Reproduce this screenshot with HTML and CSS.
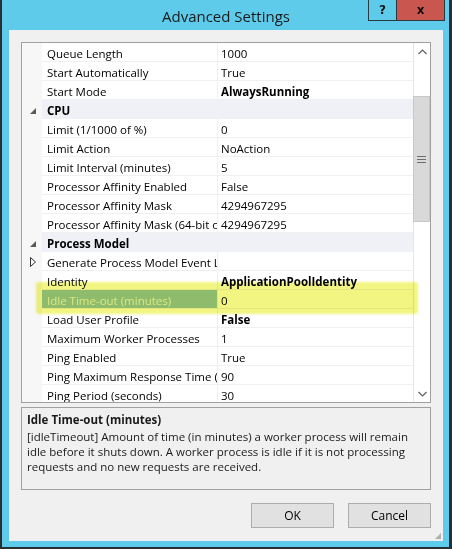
FILE: index.html
```html
<!DOCTYPE html>
<html>
<head>
<meta charset="utf-8">
<link rel="stylesheet" href="styles.css">
</head>
<body>
<div class="window">
  <div class="titlebar">
    <div class="title">Advanced Settings</div>
    <div class="caption-btns">
      <div class="cbtn help">?</div>
      <div class="cbtn close">x</div>
    </div>
  </div>
  <div class="client">
    <div class="pg">
      <div class="rows">
        <div class="row"><div class="gut"></div><div class="name">Queue Length</div><div class="val">1000</div></div>
        <div class="row"><div class="gut"></div><div class="name">Start Automatically</div><div class="val">True</div></div>
        <div class="row"><div class="gut"></div><div class="name">Start Mode</div><div class="val bold">AlwaysRunning</div></div>
        <div class="row cat"><div class="gut"><svg class="tri" width="6" height="6" viewBox="0 0 6 6"><polygon points="0,6 6,6 6,0" fill="#5a5a5a"/></svg></div><div class="catname">CPU</div></div>
        <div class="row"><div class="gut"></div><div class="name">Limit (1/1000 of %)</div><div class="val">0</div></div>
        <div class="row"><div class="gut"></div><div class="name">Limit Action</div><div class="val">NoAction</div></div>
        <div class="row"><div class="gut"></div><div class="name">Limit Interval (minutes)</div><div class="val">5</div></div>
        <div class="row"><div class="gut"></div><div class="name">Processor Affinity Enabled</div><div class="val">False</div></div>
        <div class="row"><div class="gut"></div><div class="name">Processor Affinity Mask</div><div class="val">4294967295</div></div>
        <div class="row"><div class="gut"></div><div class="name">Processor Affinity Mask (64-bit option)</div><div class="val">4294967295</div></div>
        <div class="row cat"><div class="gut"><svg class="tri" width="6" height="6" viewBox="0 0 6 6"><polygon points="0,6 6,6 6,0" fill="#5a5a5a"/></svg></div><div class="catname">Process Model</div></div>
        <div class="row"><div class="gut"><svg class="exp" width="6" height="10" viewBox="0 0 6 10"><polygon points="0.5,0.5 5.5,5 0.5,9.5" fill="none" stroke="#333" stroke-width="1"/></svg></div><div class="name">Generate Process Model Event Log Entry</div><div class="val"></div></div>
        <div class="row"><div class="gut"></div><div class="name">Identity</div><div class="val bold">ApplicationPoolIdentity</div></div>
        <div class="row"><div class="gut"></div><div class="name sel">Idle Time-out (minutes)</div><div class="val">0</div></div>
        <div class="row"><div class="gut"></div><div class="name">Load User Profile</div><div class="val bold">False</div></div>
        <div class="row"><div class="gut"></div><div class="name">Maximum Worker Processes</div><div class="val">1</div></div>
        <div class="row"><div class="gut"></div><div class="name">Ping Enabled</div><div class="val">True</div></div>
        <div class="row"><div class="gut"></div><div class="name">Ping Maximum Response Time (seconds)</div><div class="val">90</div></div>
        <div class="row"><div class="gut"></div><div class="name">Ping Period (seconds)</div><div class="val">30</div></div>
      </div>
      <div class="scrollbar">
        <div class="arrow"><svg width="9" height="6" viewBox="0 0 9 6"><polyline points="0.5,5 4.5,1 8.5,5" fill="none" stroke="#606060" stroke-width="1.2"/></svg></div>
        <div class="track top"></div>
        <div class="thumb"><svg width="9" height="7" viewBox="0 0 9 7"><rect x="0" y="0" width="9" height="1" fill="#6d6d6d"/><rect x="0" y="3" width="9" height="1" fill="#6d6d6d"/><rect x="0" y="6" width="9" height="1" fill="#6d6d6d"/></svg></div>
        <div class="track bottom"></div>
        <div class="arrow"><svg width="9" height="6" viewBox="0 0 9 6"><polyline points="0.5,1 4.5,5 8.5,1" fill="none" stroke="#606060" stroke-width="1.2"/></svg></div>
      </div>
      <div class="highlight"></div>
    </div>
    <div class="desc">
      <div class="desc-title">Idle Time-out (minutes)</div>
      <div class="desc-text">[idleTimeout] Amount of time (in minutes) a worker process will remain idle before it shuts down. A worker process is idle if it is not processing requests and no new requests are received.</div>
    </div>
    <div class="buttons">
      <div class="btn">OK</div>
      <div class="btn">Cancel</div>
    </div>
    <div class="grip"></div>
  </div>
</div>
</body>
</html>
```

FILE: styles.css
```css
html, body {
  margin: 0;
  padding: 0;
  background: #2a2f33;
}
body {
  width: 452px;
  height: 549px;
  overflow: hidden;
  font-family: "Open Sans", "Noto Sans", sans-serif;
  font-size: 11.5px;
  color: #000;
}
.window {
  box-sizing: border-box;
  width: 452px;
  height: 549px;
  border-left: 2px solid #2a2f33;
  border-right: 3px solid #2a2f33;
  border-bottom: 2px solid #2a2f33;
  background: #5dcbe9;
  padding: 0 6px 6px 7px;
  display: flex;
  flex-direction: column;
}
.titlebar {
  height: 30px;
  position: relative;
  display: flex;
  justify-content: center;
  align-items: center;
}
.title {
  font-size: 15px;
  color: #1a1a1a;
  margin-top: 1px;
  margin-left: 0;
}
.caption-btns {
  position: absolute;
  top: 0;
  right: -2px;
  display: flex;
}
.cbtn {
  height: 20px;
  display: flex;
  align-items: center;
  justify-content: center;
  font-weight: bold;
  font-family: "DejaVu Sans", sans-serif;
  color: #111;
  border-bottom: 1px solid #2a3a40;
}
.help {
  width: 27px;
  border-left: 1px solid #2a3a40;
  font-size: 12px;
}
.close {
  width: 47px;
  background: #c9574f;
  font-size: 12px;
  border-left: 1px solid #2a3a40;
  border-right: 1px solid #2a3a40;
}
.client {
  flex: 1;
  background: #f0f0f0;
  padding: 12px 12px 0 12px;
  display: flex;
  flex-direction: column;
  position: relative;
}
.pg {
  position: relative;
  height: 361px;
  box-sizing: border-box;
  border: 1px solid #a0a0a0;
  background: #fff;
  display: flex;
}
.rows {
  flex: 1;
  overflow: hidden;
}
.row {
  display: flex;
  height: 19px;
  white-space: nowrap;
}
.gut {
  width: 20px;
  flex: none;
  background: #f7f7f7;
  display: flex;
  align-items: center;
  justify-content: center;
}
.tri {
  margin-left: 2px;
  margin-top: 3px;
}
.exp {
  margin-left: 2px;
  margin-top: 1px;
}
.name, .val, .catname {
  box-sizing: border-box;
  padding-top: 2px;
  line-height: 17px;
  overflow: hidden;
}
.name {
  width: 176px;
  flex: none;
  padding-left: 5px;
  border-right: 1px solid #f0f0f0;
  border-bottom: 1px solid #f0f0f0;
}
.val {
  flex: 1;
  padding-left: 3px;
  border-bottom: 1px solid #f0f0f0;
}
.bold {
  font-weight: bold;
}
.cat .catname {
  flex: 1;
  background: #f0f1f6;
  font-weight: bold;
  padding-left: 5px;
  border-bottom: 1px solid #f0f1f6;
}
.name.sel {
  background: #97c3d6;
  color: #e6f3ff;
}
.scrollbar {
  width: 17px;
  flex: none;
  display: flex;
  flex-direction: column;
  border-left: 1px solid #e6e6e6;
  box-sizing: border-box;
  background: #fff;
}
.arrow {
  height: 17px;
  display: flex;
  align-items: center;
  justify-content: center;
}
.track.top {
  height: 36px;
}
.track.bottom {
  flex: 1;
}
.thumb {
  height: 126px;
  background: #d9d9d9;
  border: 1px solid #c8c8c8;
  box-sizing: border-box;
  margin-left: -1px;
  display: flex;
  align-items: center;
  justify-content: center;
}
.highlight {
  position: absolute;
  left: 14px;
  top: 239px;
  width: 382px;
  height: 32px;
  background: #f2f582;
  mix-blend-mode: multiply;
  filter: blur(1.2px);
  border-radius: 3px;
}
.desc {
  margin-top: 4px;
  height: 83px;
  box-sizing: border-box;
  border: 1px solid #a0a0a0;
  padding: 4px 5px 3px;
  line-height: 15px;
  color: #1a1a1a;
}
.desc-title {
  font-weight: bold;
  margin-bottom: 2px;
}
.buttons {
  display: flex;
  justify-content: flex-end;
  gap: 14px;
  margin-top: 13px;
}
.btn {
  width: 83px;
  height: 25px;
  box-sizing: border-box;
  border: 1px solid #adadad;
  background: #e1e1e1;
  display: flex;
  align-items: center;
  justify-content: center;
  font-size: 12px;
}
.grip {
  position: absolute;
  right: 2px;
  bottom: 2px;
  width: 6px;
  height: 6px;
  background-image: radial-gradient(circle, #b0b0b0 0.8px, transparent 1px);
  background-size: 2px 2px;
  clip-path: polygon(100% 0, 100% 100%, 0 100%);
}
```
